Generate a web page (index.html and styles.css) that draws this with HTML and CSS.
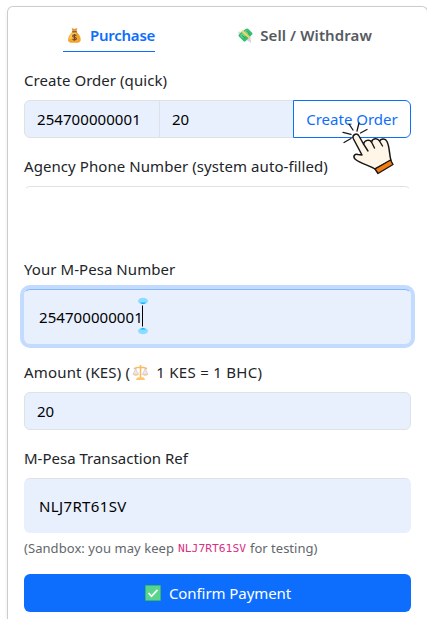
FILE: index.html
```
<!DOCTYPE html>
<html lang="en">
<head>
<meta charset="utf-8">
<title>Purchase</title>
<link rel="stylesheet" href="styles.css">
</head>
<body>
<main class="card">
  <nav class="tabs">
    <a class="tab active"><svg class="bag" viewBox="0 0 16 18"><path d="M5 1l3 1 3-1-1 4H6z" fill="#e79631"/><path d="M6 5h4c2 2 5 5 4.500 9-.3 2-2 2.700-4 2.700h-5C3 16.700 1.500 16 1.200 14 1 10 4 7 6 5z" fill="#f2a52d"/><path d="M6 6C3 8 2 11 2.500 13c4-1 8-4 7-7z" fill="#ffc84c"/><path d="M5.500 5h5" stroke="#8c5536" stroke-width="1.300"/><path d="M10 9c-1-1-4-1-4 .7 0 1.600 4 .8 4 2.500S7 14 6 12.800M8 7.500v7" fill="none" stroke="#704634" stroke-width="1.200"/></svg><span class="t-purchase">Purchase</span></a>
    <a class="tab"><svg class="cash" viewBox="0 0 18 18"><path d="M1 5l5 0-2 6zM9 13l5-4 1 8z" fill="#d5d4d8"/><path d="M2 8L9 2q2-1 3 0l4 4q1 1 0 2l-7 7q-1 1-2 0L2 10q-1-1 0-2z" fill="#36bd72"/><path d="M3 9l7-6 3 3-7 6z" fill="#65d891"/><path d="M5 4l8 7" stroke="#ffd05b" stroke-width="2.200"/><path d="M10 4l3 3M5 9l3 2" stroke="#248c57"/></svg><span class="t-sell">Sell / Withdraw</span></a>
  </nav>
  <label class="label"><span class="t-create">Create Order (quick)</span></label>
  <div class="group">
    <div class="field phone"><span class="t-phone">254700000001</span></div>
    <div class="field qty"><span class="t-num">20</span></div>
    <button class="outline"><span class="t-order">Create Order</span></button>
    <svg class="hand" viewBox="0 0 70 65"><g fill="none" stroke="#171717" stroke-width="1.300" stroke-linecap="round"><path d="M14 9l4 6M24 8l-2 8M32 14.500l-6.500 3.500M8 17.300l8 2M9 27.500l7-4"/></g><path d="M18.500 24c-2-4 3.500-7 5.500-3l4.500 8c1-4 6-5 8-2 1-4 6-4.500 8-1 2-3 6-2.500 7.500.5C55 33 54 39 56 45.500L40 54c-6-4-14-5-20-10-2.500-3 0-5.500 3-4.500l4 .5z" fill="#fff6e8" stroke="#171717" stroke-width="1.500" stroke-linejoin="round"/><path d="M28.500 29l4.500 7M36.500 27l3 6M44.500 26l3 5" fill="none" stroke="#171717" stroke-width="1.400" stroke-linecap="round"/><path d="M40 54l15.500-9 2.500 4.500L43 58.500z" fill="#f57c13" stroke="#171717" stroke-width="1.400" stroke-linejoin="round"/></svg>
  </div>
  <label class="label"><span class="t-agency">Agency Phone Number (system auto-filled)</span></label>
  <div class="field agency"></div>
  <label class="label"><span class="t-your">Your M-Pesa Number</span></label>
  <div class="field tall focused"><span class="t-phone">254700000001</span><svg class="caret" viewBox="0 0 12 38"><ellipse cx="6" cy="4" rx="5" ry="3.300" fill="#8bdcff"/><path d="M3 5.500h6q-3 3-6 0" fill="#00b7ff"/><ellipse cx="6" cy="34" rx="5" ry="3.300" fill="#8bdcff"/><path d="M3 32.500h6q-3-3-6 0" fill="#00b7ff"/><path d="M5.500 8.500v21" stroke="#000"/></svg></div>
  <label class="label"><span class="t-amount">Amount (KES) (</span><svg class="scale" viewBox="0 0 18 18"><path d="M9 1v14M2 5q7-3 14 0M5 16h8" fill="none" stroke="#f6bd62" stroke-width="1.700"/><path d="M4 5l-3 6h6zM14 5l-3 6h6z" fill="#eee7f1" stroke="#cabcd4" stroke-width=".7"/><path d="M1 11h6q-3 3-6 0M11 11h6q-3 3-6 0M6 14h6l2 3H4z" fill="#ffc66d"/></svg><span class="t-rate">1 KES = 1 BHC)</span></label>
  <div class="field"><span class="t-num">20</span></div>
  <label class="label"><span class="t-ref">M-Pesa Transaction Ref</span></label>
  <div class="field tall reference"><span class="t-code">NLJ7RT61SV</span></div>
  <p class="hint"><span class="t-sandbox">(Sandbox: you may keep</span><code>NLJ7RT61SV</code><span class="t-testing">for testing)</span></p>
  <button class="confirm"><svg class="check" viewBox="0 0 16 16"><rect width="16" height="16" rx="1" fill="#36b576"/><rect x="1" y="1" width="14" height="14" fill="#57d58a"/><path d="M3.500 8l3 3.300 6-6.500" fill="none" stroke="#fff" stroke-width="1.700"/></svg><span class="t-confirm">Confirm Payment</span></button>
</main>
</body>
</html>
```
FILE: styles.css
```
* { box-sizing: border-box; }
html { overflow: hidden; }
body { margin: 0; padding: 6px 0 0 7px; height: 619px; overflow: hidden; background: #fff; color: #212529; font: 15px/24px "Noto Sans", sans-serif; }
svg { display: block; flex: none; }
span, code { white-space: nowrap; }
.card { width: 421px; height: 613px; padding: 15px 16px 0; border: 1px solid #ccc; border-bottom: 0; border-radius: 6px 6px 0 0; box-shadow: 0 2px 4px #0001; }
.tabs { display: flex; height: 30px; margin: 0 39px 16px; justify-content: space-between; }
.tab { display: flex; align-items: center; height: 30px; padding: 0 0 4px 3px; color: #555a60; font-weight: 600; }
.tab.active { width: 92px; border-bottom: 1px solid #0d6efd; color: #0d6efd; padding: 0 0 3px 4px; }
.bag { width: 15px; height: 17px; margin: 1px 8px 0 0; }
.cash { width: 17px; height: 17px; margin: 1px 6px 0 0; }
.t-purchase { letter-spacing: -.25px; }
.t-sell { letter-spacing: .1px; }
.t-create { letter-spacing: .05px; }
.t-agency { letter-spacing: .07px; }
.t-your { letter-spacing: .06px; }
.t-phone { letter-spacing: .07px; }
.t-amount { letter-spacing: .17px; }
.t-rate { letter-spacing: .29px; }
.t-code { letter-spacing: .36px; }
.label { display: flex; align-items: center; height: 24px; margin-bottom: 8px; }
.field { display: flex; align-items: center; height: 38px; margin-bottom: 16px; padding: 0 12px; border: 1px solid #dee2e6; border-radius: 6px; background: #e8f0fe; color: #000; }
.group { display: flex; position: relative; height: 38px; margin-bottom: 16px; }
.phone { width: 136px; border-radius: 6px 0 0 6px; }
.qty { width: 135px; margin-left: -1px; border-radius: 0; }
.outline { width: 118px; margin-left: -1px; border: 1px solid #0d6efd; border-radius: 0 6px 6px 0; background: #fff; color: #0d6efd; font: inherit; padding: 0; z-index: 1; }
.hand { position: absolute; z-index: 2; left: 311px; top: 15px; width: 70px; height: 65px; }
.agency { height: 55px; background: #fff; border-color: #dee2e6 transparent transparent; }
.tall { height: 55px; padding: 0 14px; }
.focused { position: relative; border-color: #86b7fe #e8f0fe #e8f0fe; box-shadow: 0 0 0 4px #c2dbff; }
.caret { position: absolute; left: 112px; top: 7px; width: 12px; height: 38px; }
.scale { width: 17px; height: 17px; margin: 0 7px 0 2px; }
.reference { margin-bottom: 4px; border-color: #dee2e6 #e8f0fe #e8f0fe; }
.hint { display: flex; align-items: center; height: 21px; margin: 0 0 16px; color: #62676c; font-size: 13px; }
.t-sandbox { letter-spacing: .06px; }
code { margin: 2px 4px 0; color: #d63384; font: 11.300px "DejaVu Sans Mono", monospace; }
.confirm { display: flex; align-items: center; justify-content: center; width: 100%; height: 38px; border: 0; border-radius: 6px; background: #0d6efd; color: #fff; font: inherit; }
.check { width: 16px; height: 16px; margin-right: 8px; }
.t-confirm { margin-right: -1px; letter-spacing: -.07px; }
```
